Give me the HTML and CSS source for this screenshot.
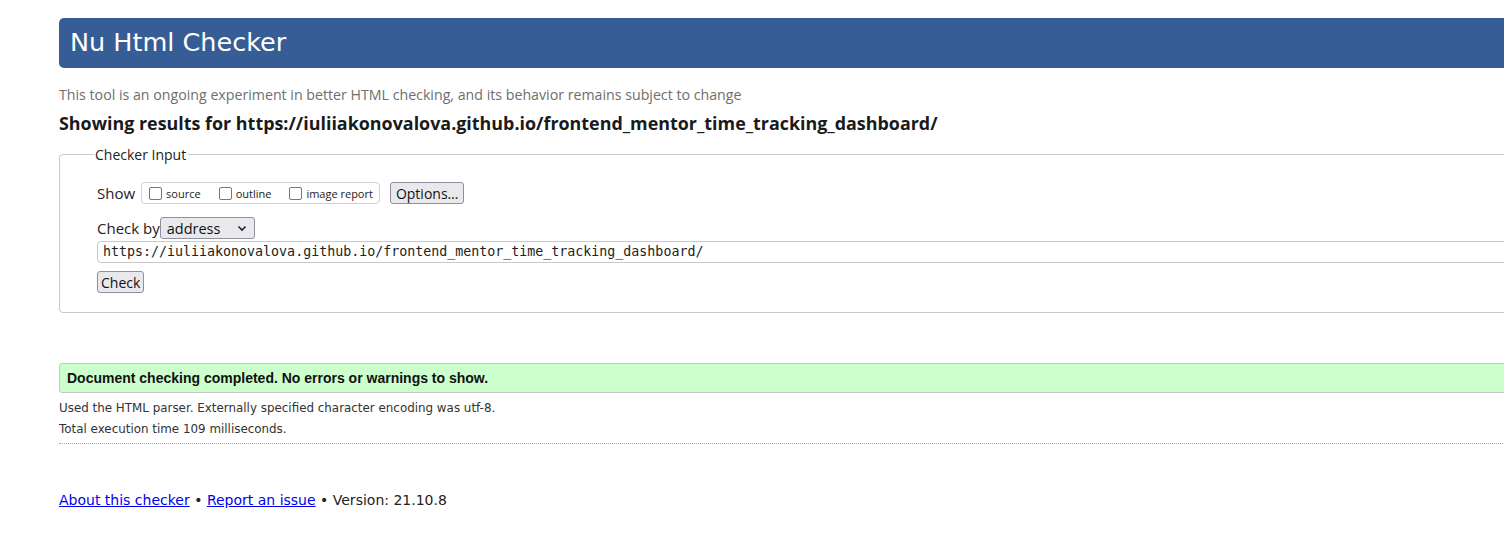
FILE: index.html
```html
<!DOCTYPE html>
<html lang="en">
<head>
<meta charset="utf-8">
<title>Nu Html Checker</title>
<link rel="stylesheet" href="styles.css">
</head>
<body>
<div class="page">
  <h1 class="banner">Nu Html Checker</h1>
  <p class="tagline">This tool is an ongoing experiment in better HTML checking, and its behavior remains subject to change</p>
  <h2 class="results-for">Showing results for https://iuliiakonovalova.github.io/frontend_mentor_time_tracking_dashboard/</h2>
  <form class="checker">
    <fieldset class="inputs">
      <legend>Checker Input</legend>
      <div class="row show-row">
        <span class="lbl">Show</span>
        <span class="group">
          <label class="opt"><span class="box"></span>source</label>
          <label class="opt"><span class="box"></span>outline</label>
          <label class="opt"><span class="box"></span>image report</label>
        </span>
        <button type="button" class="btn options">Options…</button>
      </div>
      <div class="row by-row">
        <span class="lbl">Check by</span>
        <span class="select">address<svg class="chev" width="10" height="7" viewBox="0 0 10 7"><path d="M1.5 1.5 L5 5 L8.5 1.5" fill="none" stroke="#222" stroke-width="1.6"/></svg></span>
      </div>
      <div class="url">https://iuliiakonovalova.github.io/frontend_mentor_time_tracking_dashboard/</div>
      <button type="button" class="btn check">Check</button>
    </fieldset>
  </form>
  <p class="success">Document checking completed. No errors or warnings to show.</p>
  <div class="details">
    <p>Used the HTML parser. Externally specified character encoding was utf-8.</p>
    <p>Total execution time 109 milliseconds.</p>
  </div>
  <p class="footer"><a href="#">About this checker</a> • <a href="#">Report an issue</a> • Version: 21.10.8</p>
</div>
</body>
</html>
```

FILE: styles.css
```css
html, body {
  margin: 0;
  padding: 0;
  overflow: hidden;
  background: #fff;
}
body {
  font-family: "DejaVu Sans", sans-serif;
  color: #222;
}
.page {
  margin-left: 59px;
  width: 1500px;
  padding-top: 18px;
}
.banner {
  margin: 0;
  height: 50px;
  box-sizing: border-box;
  background: #365d95;
  color: #fff;
  font-family: "DejaVu Sans", sans-serif;
  font-weight: normal;
  font-size: 25.5px;
  line-height: 48px;
  padding-left: 11px;
  border-radius: 5px;
}
.tagline {
  margin: 18px 0 0;
  font-family: "Open Sans", sans-serif;
  font-size: 14.2px;
  line-height: 18px;
  color: #6e6e6e;
}
.results-for {
  margin: 8px 0 0;
  font-family: "Open Sans", sans-serif;
  font-weight: bold;
  font-size: 17.9px;
  line-height: 22px;
  color: #1a1a1a;
}
.checker {
  margin: 11px 0 0;
}
.inputs {
  margin: 0;
  border: 1px solid #c8c8c8;
  border-radius: 4px;
  padding: 18px 0 19px 37px;
  font-family: "Open Sans", sans-serif;
}
.inputs legend {
  margin-left: -3px;
  padding: 0 2px 0 1px;
  font-size: 14px;
  color: #222;
}
.row {
  display: flex;
  align-items: center;
}
.lbl {
  font-size: 15px;
  color: #222;
}
.show-row .lbl {
  margin-right: 6px;
}
.group {
  display: inline-flex;
  align-items: center;
  height: 20px;
  border: 1px solid #d0d0d0;
  border-radius: 4px;
  padding: 0 6px 0 7px;
  gap: 18px;
}
.opt {
  display: inline-flex;
  align-items: center;
  font-size: 11px;
  color: #222;
}
.box {
  width: 11px;
  height: 11px;
  border: 1px solid #777;
  border-radius: 2px;
  margin-right: 4px;
  background: #fff;
}
.btn {
  font-family: "Open Sans", sans-serif;
  font-size: 14px;
  color: #111;
  background: #e9e9ed;
  border: 1px solid #8f8f9d;
  border-radius: 3px;
  padding: 0 5px;
  cursor: default;
}
.options {
  margin-left: 10px;
  height: 22px;
}
.by-row {
  margin-top: 13px;
}
.by-row .lbl {
  margin-right: 0;
}
.select {
  display: inline-flex;
  align-items: center;
  justify-content: space-between;
  box-sizing: border-box;
  width: 95px;
  height: 22px;
  padding: 0 7px 0 6px;
  background: #e9e9ed;
  border: 1px solid #8f8f9d;
  border-radius: 3px;
  font-size: 14.5px;
  color: #111;
}
.url {
  margin-top: 2px;
  height: 22px;
  box-sizing: border-box;
  border: 1px solid #c8c8c8;
  border-radius: 4px;
  padding-left: 5px;
  font-family: "DejaVu Sans Mono", monospace;
  font-size: 13.3px;
  line-height: 20px;
  color: #222;
}
.check {
  display: block;
  margin-top: 8px;
  height: 22px;
  padding: 0 3px;
}
.success {
  margin: 50px 0 0;
  height: 30px;
  box-sizing: border-box;
  background: #ccffcc;
  border: 1px solid #c6c6c6;
  border-radius: 3px;
  padding-left: 7px;
  font-family: "Liberation Sans", sans-serif;
  font-weight: bold;
  font-size: 14px;
  line-height: 28px;
  color: #111;
}
.details {
  border-bottom: 1px dotted #aaa;
  padding: 5px 0 3px;
}
.details p {
  margin: 0;
  font-size: 11.9px;
  line-height: 21px;
  color: #333;
}
.footer {
  margin: 47px 0 0;
  font-size: 14px;
  line-height: 18px;
  color: #222;
}
.footer a {
  color: #00e;
}
```
